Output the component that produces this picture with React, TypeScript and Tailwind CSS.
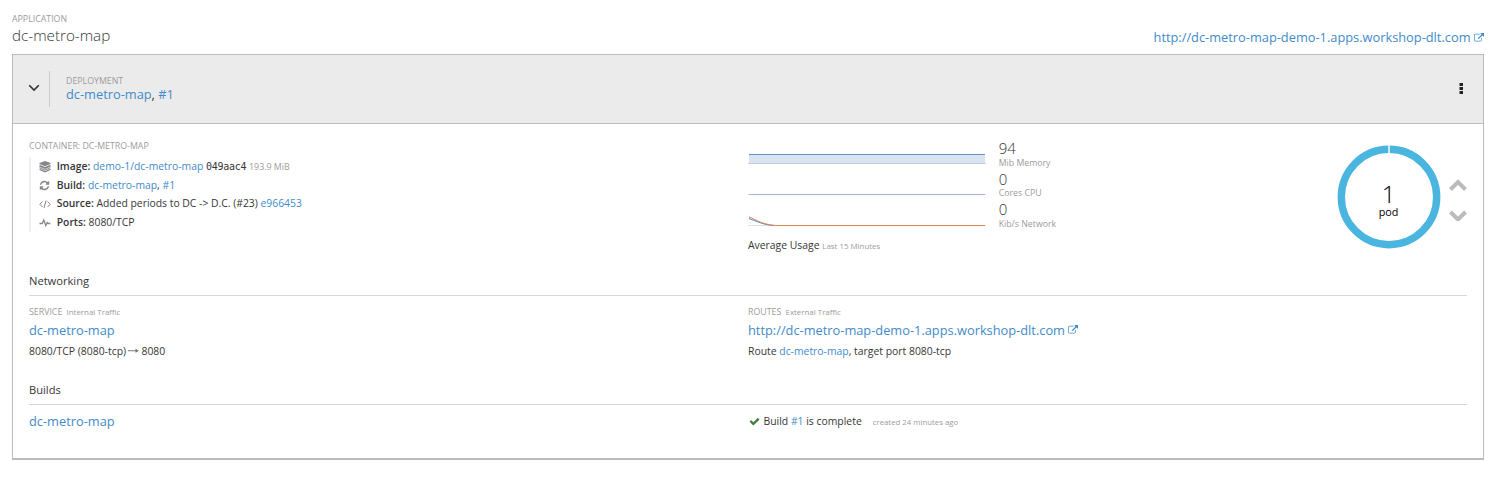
import type { ReactNode } from 'react';

const EXTERNAL =
  'M1408 928v320q0 119-84.5 203.5t-203.5 84.5h-832q-119 0-203.5-84.5t-84.5-203.5v-832q0-119 84.5-203.5t203.5-84.5h704q14 0 23 9t9 23v64q0 14-9 23t-23 9h-704q-66 0-113 47t-47 113v832q0 66 47 113t113 47h832q66 0 113-47t47-113v-320q0-14 9-23t23-9h64q14 0 23 9t9 23zm384-864v512q0 26-19 45t-45 19-45-19l-176-176-652 652q-10 10-23 10t-23-10l-114-114q-10-10-10-23t10-23l652-652-176-176q-19-19-19-45t19-45 45-19h512q26 0 45 19t19 45z';
const CHECK =
  'M1671 566q0 40-28 68l-724 724-136 136q-28 28-68 28t-68-28l-136-136-362-362q-28-28-28-68t28-68l136-136q28-28 68-28t68 28l294 295 656-657q28-28 68-28t68 28l136 136q28 28 28 68z';
const REFRESH =
  'M1639 1056q0 5-1 7-64 268-268 434.500t-478 166.500q-146 0-282.500-55t-243.500-157l-129 129q-19 19-45 19t-45-19-19-45v-448q0-26 19-45t45-19h448q26 0 45 19t19 45-19 45l-137 137q71 66 161 102t187 36q134 0 250-65t186-179q11-17 53-117 8-23 30-23h192q13 0 22.500 9.500t9.500 22.500zm25-800v448q0 26-19 45t-45 19h-448q-26 0-45-19t-19-45 19-45l138-138q-148-137-349-137-134 0-250 65t-186 179q-11 17-53 117-8 23-30 23h-199q-13 0-22.500-9.500t-9.500-22.500v-7q65-268 270-434.500t480-166.500q146 0 284 55.500t245 156.500l130-129q19-19 45-19t45 19 19 45z';

function Glyph({ d, className }: { d: string; className: string }) {
  return (
    <svg viewBox="0 0 1792 1792" fill="currentColor" className={className}>
      <path d={d} />
    </svg>
  );
}

function Link({ children }: { children: ReactNode }) {
  return <a className="text-[#428bca]">{children}</a>;
}

function Detail({ icon, label, children }: { icon: ReactNode; label: string; children: ReactNode }) {
  return (
    <div className="flex h-[18.600px] items-center">
      <span className="flex w-[25.700px] items-center pl-[8px] text-[#85878a]">{icon}</span>
      <span className="whitespace-pre text-[10.360px]">
        <span className="font-semibold">{label}:</span> {children}
      </span>
    </div>
  );
}

function Metric({ value, unit }: { value: string; unit: string }) {
  return (
    <div className="h-[30.600px]">
      <div className="text-[15px] leading-[16px] font-light">{value}</div>
      <div className="pt-[1.500px] text-[8.750px] leading-[11px] text-[#9c9c9c]">{unit}</div>
    </div>
  );
}

export default function App() {
  return (
    <main className="h-[479px] w-[1496px] bg-white px-3 pt-3 font-['Open_Sans',sans-serif] text-[#363636]">
      <header className="flex h-[42px] justify-between">
        <div>
          <div className="pt-px text-[8.800px] leading-[13px] text-[#9c9c9c]">APPLICATION</div>
          <h1 className="text-[15.200px] leading-[19px] font-light">dc-metro-map</h1>
        </div>
        <div className="flex items-center gap-[3.500px] pt-[9px] text-[12.820px] text-[#428bca]">
          <a>http://dc-metro-map-demo-1.apps.workshop-dlt.com</a>
          <Glyph d={EXTERNAL} className="size-[10px]" />
        </div>
      </header>

      <section className="h-[405.500px] border border-b-2 border-[#bbb]">
        <div className="flex h-[69px] items-center border-b border-[#bbb] bg-[#ebebeb]">
          <svg viewBox="0 0 12 8" className="mb-[3px] ml-[15px] h-2 w-3" fill="none" stroke="#333" strokeWidth="1.6">
            <path d="M1.2 1.2 6 6l4.800-4.800" />
          </svg>
          <div className="ml-[9px] h-9 border-l border-[#cbcbcb]" />
          <div className="mb-px ml-4">
            <div className="text-[8.800px] leading-[13px] text-[#9c9c9c]">DEPLOYMENT</div>
            <div className="mb-[2px] text-[12.820px] leading-[12px]">
              <Link>dc-metro-map</Link>, <Link>#1</Link>
            </div>
          </div>
          <svg viewBox="0 0 4 12" className="mr-5 mb-px ml-auto h-3 w-1" fill="#222">
            <rect x=".5" y="0" width="3.500" height="3" />
            <rect x=".5" y="4" width="3.500" height="3" />
            <rect x=".5" y="8" width="3.500" height="3" />
          </svg>
        </div>

        <div className="px-4">
          <div className="flex h-[143px] pt-[15px]">
            <div className="w-[719px]">
              <div className="text-[8.800px] leading-[14px] text-[#9c9c9c]">CONTAINER: DC-METRO-MAP</div>
              <div className="mt-1 h-[75px] border-l-2 border-[#f0f0f0] pt-[.600px]">
                <Detail
                  label="Image"
                  icon={
                    <svg viewBox="0 0 12 12" className="size-3" fill="currentColor">
                      <path d="M6 .1 11.500 2v1.100L6 5.300.5 3.100V2z" />
                      <path d="M.5 3.700 6 5.900l5.500-2.200v2.100L6 8 .5 5.800zM.5 6.300 6 8.500l5.500-2.200v1L6 9.600.5 7.300zM.5 7.800 6 10.100 11.500 7.800v1.300L6 11.500.5 9.100z" />
                    </svg>
                  }
                >
                  <Link>demo-1/dc-metro-map</Link>{' '}
                  <span className="font-['DejaVu_Sans_Mono',monospace] text-[10px] tracking-[-0.250px]">049aac4</span>{' '}
                  <span className="text-[8.800px] text-[#9c9c9c]">193.9 MiB</span>
                </Detail>
                <Detail label="Build" icon={<Glyph d={REFRESH} className="size-[11px]" />}>
                  <Link>dc-metro-map</Link>, <Link>#1</Link>
                </Detail>
                <Detail
                  label="Source"
                  icon={
                    <svg viewBox="0 0 12 10" className="h-2.5 w-3" fill="none" stroke="currentColor">
                      <path d="M3.500 2.500.8 5.300l2.700 2.800M8.500 2.500l2.700 2.800-2.700 2.800M7 1.500 5 9" />
                    </svg>
                  }
                >
                  Added periods to DC -&gt; D.C. (#23) <Link>e966453</Link>
                </Detail>
                <Detail
                  label="Ports"
                  icon={
                    <svg viewBox="0 0 12 10" className="h-2.5 w-3" fill="none" stroke="currentColor" strokeWidth="1.3">
                      <path d="M.5 5.500h2.700L4.800 2l2 5.500 1.500-3 .7 1h2.300" />
                    </svg>
                  }
                >
                  8080/TCP
                </Detail>
              </div>
            </div>

            <div className="w-[250.700px]">
              <svg viewBox="0 0 250 91" className="h-[91px] w-[250px]" fill="none">
                <path d="M1 15.500h236v9H1z" fill="#d9e4f1" />
                <path d="M0 24.500h238" stroke="#c3cedd" />
                <path d="M0 55.500h238M0 86.500h238" stroke="#e2e2e2" />
                <path d="M1 15.500h236" stroke="#6b8fc9" />
                <path d="M1 55.500h236" stroke="#9db8d8" />
                <path d="M1 79.500C9 82.500 17 86.300 26 86.500" stroke="#4b8fd0" />
                <path d="M1 77.800C9 81.500 17 86.500 30 86.500h207" stroke="#e08450" />
              </svg>
              <div className="pt-[6px] text-[10.400px] leading-[18px]">
                Average Usage <span className="text-[7.900px] text-[#9c9c9c]">Last 15 Minutes</span>
              </div>
            </div>
            <div className="pt-px">
              <Metric value="94" unit="Mib Memory" />
              <Metric value="0" unit="Cores CPU" />
              <Metric value="0" unit="Kib/s Network" />
            </div>

            <div className="mt-[6px] ml-auto grid size-[104px] place-items-center">
              <svg viewBox="0 0 104 104" className="col-start-1 row-start-1 size-[104px]" fill="none">
                <circle cx="52" cy="52" r="47.700" stroke="#4ab6e0" strokeWidth="7.400" />
                <path d="M52 0v9" stroke="#fff" strokeWidth="1.500" />
              </svg>
              <div className="col-start-1 row-start-1 pt-1 text-center text-black">
                <div className="pt-px text-[24px] leading-[24px] font-light">1</div>
                <div className="text-[10.800px] leading-[12px]">pod</div>
              </div>
            </div>
            <svg viewBox="0 0 18 44" className="mt-[38px] mr-[.500px] ml-2 h-11 w-[18px]" fill="none" stroke="#bbb" strokeWidth="4">
              <path d="M1.500 12.500 9 5l7.500 7.500M1.500 35 9 42.500l7.500-7.500" />
            </svg>
          </div>

          <h2 className="h-[29px] border-b border-[#d8d8d8] pt-[5px] text-[11.150px] leading-[18px]">Networking</h2>
          <div className="flex h-[88px] pt-[9px]">
            <div className="w-[719px]">
              <div className="text-[8.800px] leading-[14px] text-[#9c9c9c]">
                SERVICE <span className="ml-0.5 text-[7.900px]">Internal Traffic</span>
              </div>
              <div className="text-[12.820px] leading-[22px]"><Link>dc-metro-map</Link></div>
              <div className="flex items-center text-[10.400px] leading-[20px]">
                8080/TCP (8080-tcp)
                <svg viewBox="0 0 11 6" className="mx-[2.200px] h-1.5 w-[11px]" fill="#777">
                  <path d="M0 2.300h7.500V.8L11 2.800 7.500 4.800V3.300H0z" />
                </svg>
                8080
              </div>
            </div>
            <div>
              <div className="text-[8.800px] leading-[14px] text-[#9c9c9c]">
                ROUTES <span className="ml-0.5 text-[7.900px]">External Traffic</span>
              </div>
              <div className="flex items-center gap-[3.500px] text-[12.820px] leading-[22px] text-[#428bca]">
                <a>http://dc-metro-map-demo-1.apps.workshop-dlt.com</a>
                <Glyph d={EXTERNAL} className="size-[10px]" />
              </div>
              <div className="text-[10.400px] leading-[20px]">
                Route <Link>dc-metro-map</Link>, target port 8080-tcp
              </div>
            </div>
          </div>
          <h2 className="h-[21px] border-b border-[#d8d8d8] text-[11.150px] leading-[12px]">Builds</h2>
          <div className="flex h-[34px] items-center">
            <div className="w-[720px] text-[12.820px]"><Link>dc-metro-map</Link></div>
            <Glyph d={CHECK} className="mb-px size-[11px] text-[#3f7f3a]" />
            <div className="ml-[3.500px] text-[10.400px]">Build <Link>#1</Link> is complete</div>
            <div className="mt-px ml-[11px] text-[7.800px] text-[#9c9c9c]">created 24 minutes ago</div>
          </div>
        </div>
      </section>
    </main>
  );
}
